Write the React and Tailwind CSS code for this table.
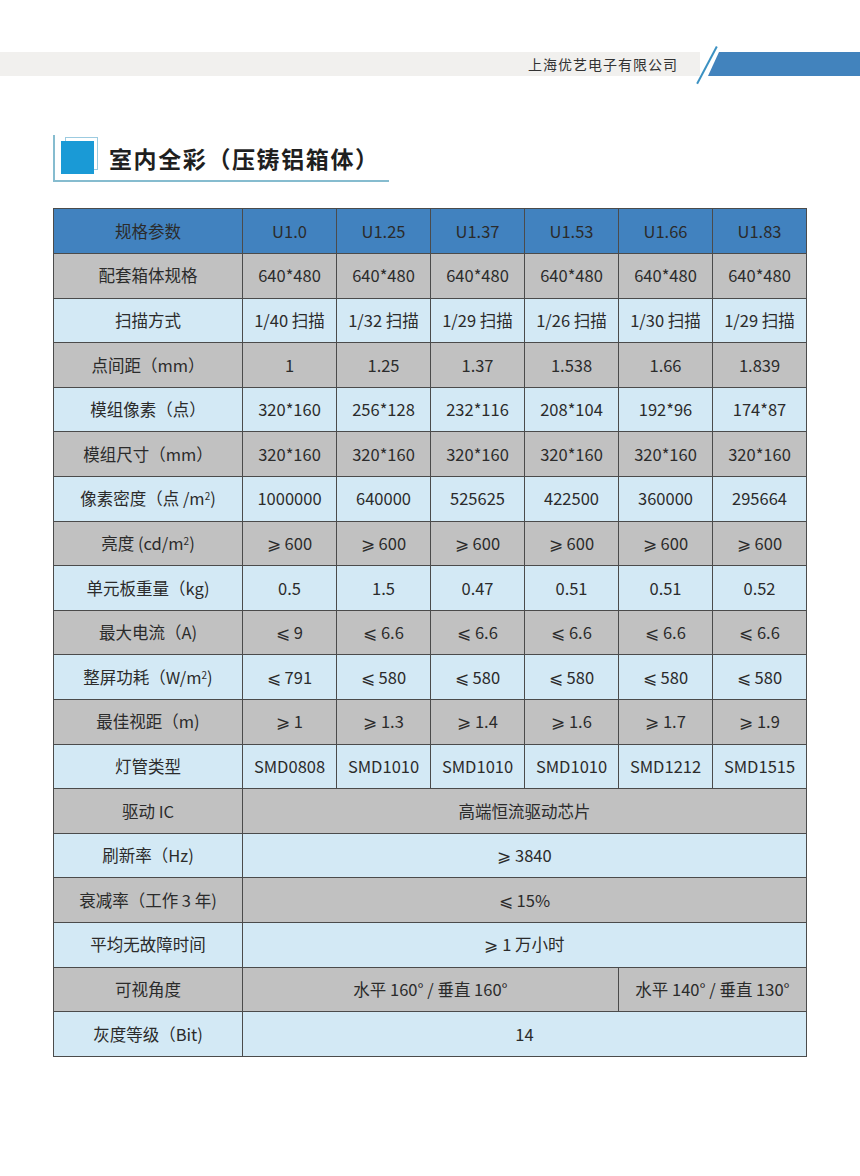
const models = ["U1.0", "U1.25", "U1.37", "U1.53", "U1.66", "U1.83"];

const rows = [
  { label: "配套箱体规格", cells: ["640*480", "640*480", "640*480", "640*480", "640*480", "640*480"] },
  { label: "扫描方式", cells: ["1/40 扫描", "1/32 扫描", "1/29 扫描", "1/26 扫描", "1/30 扫描", "1/29 扫描"] },
  { label: "点间距（mm）", cells: ["1", "1.25", "1.37", "1.538", "1.66", "1.839"] },
  { label: "模组像素（点）", cells: ["320*160", "256*128", "232*116", "208*104", "192*96", "174*87"] },
  { label: "模组尺寸（mm）", cells: ["320*160", "320*160", "320*160", "320*160", "320*160", "320*160"] },
  { label: <>像素密度（点 /m<sup className="text-[10px]">2</sup>)</>, cells: ["1000000", "640000", "525625", "422500", "360000", "295664"] },
  { label: <>亮度 (cd/m<sup className="text-[10px]">2</sup>)</>, cells: ["⩾ 600", "⩾ 600", "⩾ 600", "⩾ 600", "⩾ 600", "⩾ 600"] },
  { label: "单元板重量（kg)", cells: ["0.5", "1.5", "0.47", "0.51", "0.51", "0.52"] },
  { label: "最大电流（A)", cells: ["⩽ 9", "⩽ 6.6", "⩽ 6.6", "⩽ 6.6", "⩽ 6.6", "⩽ 6.6"] },
  { label: <>整屏功耗（W/m<sup className="text-[10px]">2</sup>)</>, cells: ["⩽ 791", "⩽ 580", "⩽ 580", "⩽ 580", "⩽ 580", "⩽ 580"] },
  { label: "最佳视距（m)", cells: ["⩾ 1", "⩾ 1.3", "⩾ 1.4", "⩾ 1.6", "⩾ 1.7", "⩾ 1.9"] },
  { label: "灯管类型", cells: ["SMD0808", "SMD1010", "SMD1010", "SMD1010", "SMD1212", "SMD1515"] },
  { label: "驱动 IC", span: "高端恒流驱动芯片" },
  { label: "刷新率（Hz)", span: "⩾ 3840" },
  { label: "衰减率（工作 3 年)", span: "⩽ 15%" },
  { label: "平均无故障时间", span: "⩾ 1 万小时" },
  { label: "可视角度", split: ["水平 160° / 垂直 160°", "水平 140° / 垂直 130°"] },
  { label: "灰度等级（Bit)", span: "14" },
];

const cell = "border border-[#4b4b4b] text-center align-middle p-0 whitespace-nowrap";

export default function App() {
  return (
    <div className="w-[860px] h-[1176px] bg-white text-[#2b2b2b]"
         style={{ fontFamily: '"Noto Sans CJK SC", "Noto Sans", sans-serif' }}>
      {/* top band */}
      <div className="pt-[52px] flex items-stretch h-[76px] relative">
        <div className="w-[700px] bg-[#f1f0ee] flex items-center justify-end pr-[22px] text-[14px] text-[#333] tracking-[1px]">
          上海优艺电子有限公司
        </div>
        <div className="flex-1 bg-[#4283bd] [clip-path:polygon(11px_0,100%_0,100%_100%,0_100%)] ml-[8px]" />
        <div className="absolute left-[706px] top-[44px] w-[1.5px] h-[42px] bg-[#3b91c2] rotate-[28deg]" />
      </div>

      {/* title */}
      <div className="ml-[53px] mt-[59px] w-[336px] h-[47px] border-l-2 border-b-2 border-[#86bccf] flex items-end pb-[6px]">
        <div className="relative w-[33px] h-[33px] ml-[6px] mr-[15px]">
          <div className="absolute left-[4px] -top-[4px] w-[33px] h-[33px] border border-[#9ccbe0]" />
          <div className="absolute inset-0 bg-[#1a9ad6]" />
        </div>
        <div className="text-[23px] font-bold tracking-[1.6px] leading-none pb-[4px] text-[#1f1f1f]">
          室内全彩（压铸铝箱体）
        </div>
      </div>

      {/* table */}
      <table className="ml-[53px] mt-[26px] border-collapse table-fixed w-[754px] text-[16.5px]">
        <colgroup>
          <col className="w-[189px]" />
          {models.map((m) => <col key={m} className="w-[94px]" />)}
        </colgroup>
        <tbody>
          <tr className="h-[45px] bg-[#4182bf]">
            <td className={cell}>规格参数</td>
            {models.map((m) => <td key={m} className={cell}>{m}</td>)}
          </tr>
          {rows.map((r, i) => (
            <tr key={i} className={`h-[44.6px] ${i % 2 === 0 ? "bg-[#c1c1c1]" : "bg-[#d3e9f5]"}`}>
              <td className={cell}>{r.label}</td>
              {r.cells && r.cells.map((c, j) => <td key={j} className={cell}>{c}</td>)}
              {r.span && <td colSpan={6} className={cell}>{r.span}</td>}
              {r.split && (
                <>
                  <td colSpan={4} className={cell}>{r.split[0]}</td>
                  <td colSpan={2} className={cell}>{r.split[1]}</td>
                </>
              )}
            </tr>
          ))}
        </tbody>
      </table>
    </div>
  );
}
